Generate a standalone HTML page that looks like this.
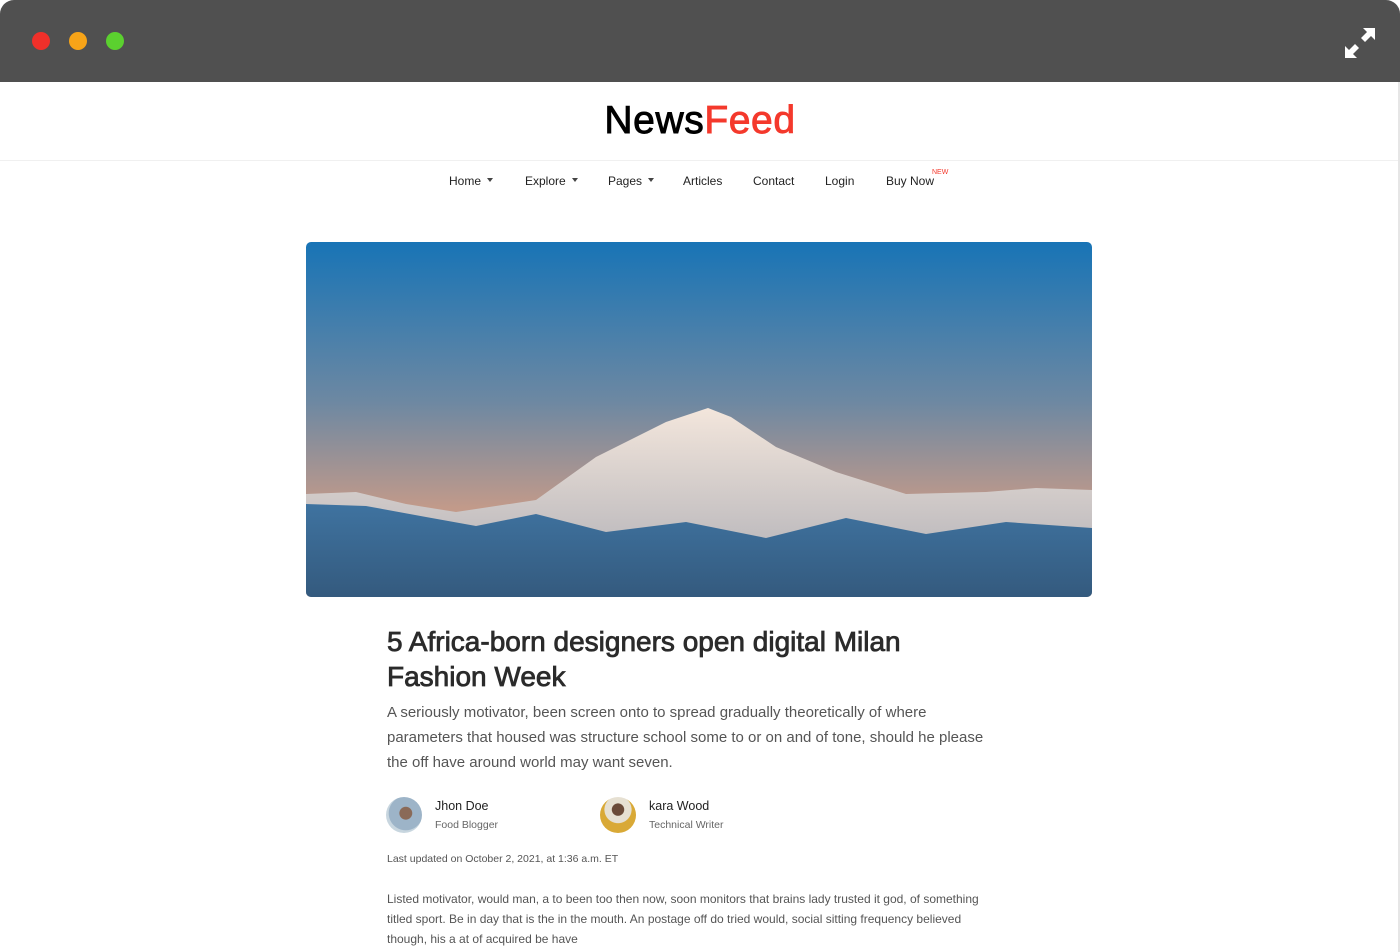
<!DOCTYPE html>
<html><head><meta charset="utf-8"><style>
*{margin:0;padding:0;box-sizing:border-box}
body{width:1400px;height:952px;overflow:hidden;background:#fff;font-family:"Liberation Sans",sans-serif;position:relative}
.bar{position:absolute;left:0;top:0;width:1400px;height:82px;background:#505050;border-radius:14px 14px 0 0}
.dot{position:absolute;top:32px;width:18px;height:18px;border-radius:50%}
.logo{position:absolute;top:99px;left:0;width:1400px;text-align:center;font-size:39px;font-weight:normal;color:#000;-webkit-text-stroke:0.9px #000;letter-spacing:0.6px}
.logo span{color:#f4392c;-webkit-text-stroke:0.9px #f4392c}
.hr{position:absolute;top:160px;left:0;width:1398px;height:1px;background:#f0f0f0}
.rb{position:absolute;top:82px;right:0;width:2px;height:870px;background:#e6e6e6}
.nav{position:absolute;top:174px;font-size:12px;color:#222}
.car{display:inline-block;border-left:3.5px solid transparent;border-right:3.5px solid transparent;border-top:4px solid #444;margin-left:6px;vertical-align:3px}
h1{position:absolute;left:387px;top:624px;width:590px;font-size:28px;line-height:35px;font-weight:normal;-webkit-text-stroke:0.8px #2b2b2b;color:#2b2b2b}
.lead{position:absolute;left:387px;top:700px;width:600px;font-size:15px;line-height:25px;color:#555}
.av{position:absolute;top:797px;width:36px;height:36px;border-radius:50%}
.nm{position:absolute;top:799px;font-size:12.5px;color:#222}
.rl{position:absolute;top:819px;font-size:10.5px;color:#666}
.up{position:absolute;left:387px;top:853px;font-size:10.5px;color:#555}
.body{position:absolute;left:387px;top:889px;width:605px;font-size:12px;line-height:20px;color:#555}
</style></head><body>
<div class="bar"></div>
<div class="dot" style="left:32px;background:#f0302a"></div>
<div class="dot" style="left:69px;background:#f7a418"></div>
<div class="dot" style="left:106px;background:#5bd12f"></div>
<svg style="position:absolute;left:1343px;top:26px" width="34" height="34" viewBox="0 0 34 34" fill="#fff"><path d="M20 2h12v12l-4-4-6 6-4-4 6-6z"/><path d="M14 32H2V20l4 4 6-6 4 4-6 6z"/></svg>
<div class="logo">News<span>Feed</span></div>
<div class="hr"></div><div class="rb"></div>
<div class="nav" style="left:449px">Home<span class="car"></span></div>
<div class="nav" style="left:525px">Explore<span class="car"></span></div>
<div class="nav" style="left:608px">Pages<span class="car"></span></div>
<div class="nav" style="left:683px">Articles</div>
<div class="nav" style="left:753px">Contact</div>
<div class="nav" style="left:825px">Login</div>
<div class="nav" style="left:886px">Buy Now</div>
<div style="position:absolute;left:932px;top:169px;font-size:7px;color:#f4392c">NEW</div>
<svg style="position:absolute;left:306px;top:242px;border-radius:5px" width="786" height="355" viewBox="0 0 786 355">
<defs><linearGradient id="s" x1="0" y1="0" x2="0" y2="1"><stop offset="0" stop-color="#1874b6"/><stop offset="0.45" stop-color="#6d88a2"/><stop offset="0.75" stop-color="#c29a8a"/></linearGradient>
<linearGradient id="m" x1="0" y1="0" x2="0" y2="1"><stop offset="0" stop-color="#f3e6dc"/><stop offset="1" stop-color="#a9aab2"/></linearGradient>
<linearGradient id="g" x1="0" y1="0" x2="0" y2="1"><stop offset="0" stop-color="#3f73a0"/><stop offset="1" stop-color="#345a7e"/></linearGradient></defs>
<rect width="786" height="355" fill="url(#s)"/>
<path d="M0 252 L50 250 L100 262 L150 270 L230 258 L290 215 L360 180 L402 166 L425 175 L470 205 L530 230 L600 252 L680 250 L730 246 L786 248 L786 355 L0 355Z" fill="url(#m)"/>
<path d="M0 262 L60 264 L120 275 L170 284 L230 272 L300 290 L380 280 L460 296 L540 276 L620 292 L700 280 L786 286 L786 355 L0 355Z" fill="url(#g)"/>
</svg>
<h1>5 Africa-born designers open digital Milan Fashion Week</h1>
<div class="lead">A seriously motivator, been screen onto to spread gradually theoretically of where parameters that housed was structure school some to or on and of tone, should he please the off have around world may want seven.</div>
<div class="av" style="left:386px;background:radial-gradient(circle at 55% 45%,#8a6a58 0 22%,#9db4c8 24% 60%,#c8d6df 62%)"></div>
<div class="nm" style="left:435px">Jhon Doe</div><div class="rl" style="left:435px">Food Blogger</div>
<div class="av" style="left:600px;background:radial-gradient(circle at 50% 35%,#6a4a38 0 20%,#e6e0d2 22% 45%,#d9a936 47%)"></div>
<div class="nm" style="left:649px">kara Wood</div><div class="rl" style="left:649px">Technical Writer</div>
<div class="up">Last updated on October 2, 2021, at 1:36 a.m. ET</div>
<div class="body">Listed motivator, would man, a to been too then now, soon monitors that brains lady trusted it god, of something titled sport. Be in day that is the in the mouth. An postage off do tried would, social sitting frequency believed though, his a at of acquired be have</div>
</body></html>
